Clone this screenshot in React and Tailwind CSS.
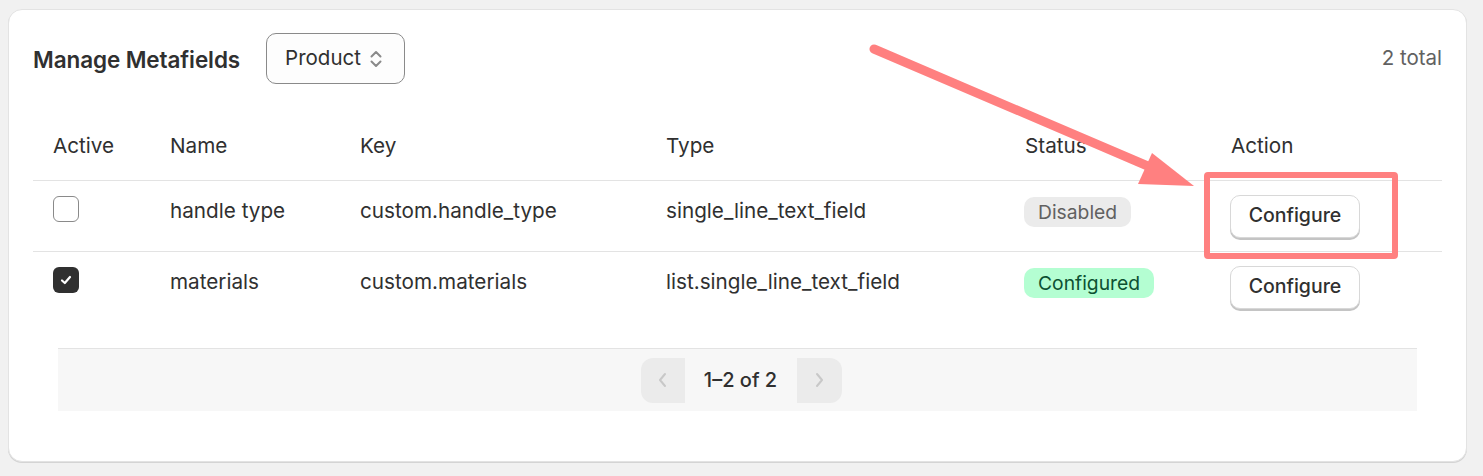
import React from "react";

const rows = [
  { active: false, name: "handle type", key: "custom.handle_type", type: "single_line_text_field", status: "Disabled" },
  { active: true, name: "materials", key: "custom.materials", type: "list.single_line_text_field", status: "Configured" },
];

function StatusBadge({ status }) {
  if (status === "Configured") {
    return (
      <span className="inline-flex h-[30px] items-center rounded-[10px] bg-[#b4fed2] px-[14px] text-[19.3px] text-[#0c5132]">
        {status}
      </span>
    );
  }
  return (
    <span className="inline-flex h-[30px] items-center rounded-[10px] bg-[#ebebeb] px-[14px] text-[19.3px] text-[#616161]">
      {status}
    </span>
  );
}

function App() {
  return (
    <div
      className="relative min-h-screen bg-[#f1f1f1] pt-[9px] pl-[8px] pr-[16px]"
      style={{ fontFamily: "Inter, 'Noto Sans', sans-serif" }}
    >
      {/* Card */}
      <div className="h-[453px] rounded-[14px] border border-[#e3e3e3] bg-white px-[24px] pt-[23px] text-[#303030] shadow-[0_1px_0_#d4d4d4]">
        {/* Header */}
        <div className="flex h-[51px] items-center">
          <h2 className="pt-[2px] text-[22.5px] font-semibold tracking-[-0.1px]">Manage Metafields</h2>
          <button className="ml-[26px] flex h-[51px] items-center gap-[7px] rounded-[10px] border border-[#8a8a8a] bg-[#fdfdfd] pl-[18px] pr-[20px] text-[20.5px]">
            Product
            <svg width="16" height="22" viewBox="0 0 16 22" fill="none" stroke="#8a8a8a" strokeWidth="2" strokeLinecap="round" strokeLinejoin="round">
              <path d="M3.5 8.5 8 4l4.5 4.5" />
              <path d="M3.5 13.5 8 18l4.5-4.5" />
            </svg>
          </button>
          <div className="ml-auto text-[20.5px] text-[#616161]">2 total</div>
        </div>

        {/* Table */}
        <table className="mt-[26px] w-full table-fixed border-collapse text-left text-[20.7px]">
          <colgroup>
            <col className="w-[117px]" />
            <col className="w-[190px]" />
            <col className="w-[306px]" />
            <col className="w-[359px]" />
            <col className="w-[206px]" />
            <col />
          </colgroup>
          <thead>
            <tr className="h-[70px] border-b border-[#e3e3e3]">
              <th className="pl-[20px] pt-[1px] font-normal">Active</th>
              <th className="pl-[20px] pt-[1px] font-normal">Name</th>
              <th className="pl-[20px] pt-[1px] font-normal">Key</th>
              <th className="pl-[20px] pt-[1px] font-normal">Type</th>
              <th className="pl-[20px] pt-[1px] font-normal">Status</th>
              <th className="pl-[20px] pt-[1px] font-normal">Action</th>
            </tr>
          </thead>
          <tbody>
            {rows.map((r, i) => (
              <tr key={r.key} className={i === 0 ? "h-[71px] border-b border-[#e3e3e3]" : "h-[60px]"}>
                <td className="pl-[20px] pt-[15px] align-top">
                  {r.active ? (
                    <span className="flex h-[26px] w-[26px] items-center justify-center rounded-[6px] bg-[#303030]">
                      <svg width="14" height="14" viewBox="0 0 14 14" fill="none" stroke="white" strokeWidth="2.2" strokeLinecap="round" strokeLinejoin="round">
                        <path d="M3 7.5 5.8 10 11 4" />
                      </svg>
                    </span>
                  ) : (
                    <span className="block h-[26px] w-[26px] rounded-[6px] border border-[#8a8a8a] bg-white" />
                  )}
                </td>
                <td className="pl-[20px] pt-[15px] align-top leading-[30px]">{r.name}</td>
                <td className="pl-[20px] pt-[15px] align-top leading-[30px]">{r.key}</td>
                <td className="pl-[20px] pt-[15px] align-top leading-[30px]">{r.type}</td>
                <td className="pl-[19px] pt-[15px] align-top">
                  <StatusBadge status={r.status} />
                </td>
                <td className="pl-[19px] pt-[14px] align-top">
                  <button className="h-[43px] w-[130px] rounded-[10px] border border-[#d8d8d8] bg-white text-[19.5px] font-medium text-[#303030] shadow-[0_2px_0_#c4c4c4]">
                    Configure
                  </button>
                </td>
              </tr>
            ))}
          </tbody>
        </table>

        {/* Pagination */}
        <div className="mx-[25px] mt-[37px] flex h-[63px] items-center justify-center border-t border-[#e3e3e3] bg-[#f7f7f7] pl-[7px]">
          <div className="flex h-[45px] items-center">
            <button className="flex h-[45px] w-[44px] items-center justify-center rounded-l-[12px] bg-[#ebebeb]">
              <svg width="12" height="18" viewBox="0 0 12 18" fill="none" stroke="#c8c8c8" strokeWidth="2" strokeLinecap="round" strokeLinejoin="round">
                <path d="M8 3 3 9l5 6" />
              </svg>
            </button>
            <span className="w-[112px] text-center text-[20px] font-medium text-[#303030]">1–2 of 2</span>
            <button className="flex h-[45px] w-[45px] items-center justify-center rounded-r-[12px] bg-[#ebebeb]">
              <svg width="12" height="18" viewBox="0 0 12 18" fill="none" stroke="#c8c8c8" strokeWidth="2" strokeLinecap="round" strokeLinejoin="round">
                <path d="M4 3l5 6-5 6" />
              </svg>
            </button>
          </div>
        </div>
      </div>

      {/* Annotation: arrow */}
      <svg className="pointer-events-none absolute left-0 top-0" width="1483" height="476">
        <line x1="874" y1="49" x2="1150" y2="167" stroke="#ff8080" strokeWidth="9" strokeLinecap="round" />
        <polygon points="1194,186 1138,184 1152,153" fill="#ff8080" />
      </svg>

      {/* Annotation: highlight box */}
      <div className="pointer-events-none absolute left-[1204px] top-[172px] h-[87px] w-[194px] rounded-[4px] border-[6px] border-[#ff8080]" />
    </div>
  );
}

export default App;
